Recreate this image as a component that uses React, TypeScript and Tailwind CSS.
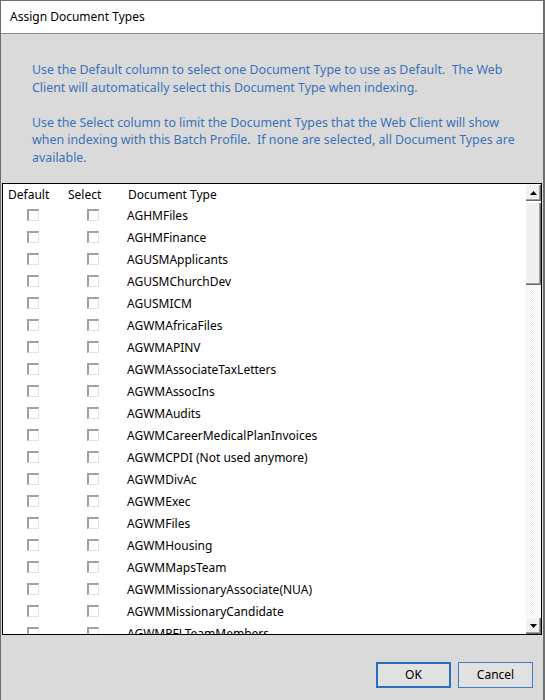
const items = [
  'AGHMFiles',
  'AGHMFinance',
  'AGUSMApplicants',
  'AGUSMChurchDev',
  'AGUSMICM',
  'AGWMAfricaFiles',
  'AGWMAPINV',
  'AGWMAssociateTaxLetters',
  'AGWMAssocIns',
  'AGWMAudits',
  'AGWMCareerMedicalPlanInvoices',
  'AGWMCPDI (Not used anymore)',
  'AGWMDivAc',
  'AGWMExec',
  'AGWMFiles',
  'AGWMHousing',
  'AGWMMapsTeam',
  'AGWMMissionaryAssociate(NUA)',
  'AGWMMissionaryCandidate',
  'AGWMPFLTeamMembers',
];

function Check() {
  return (
    <span className="block w-[12px] h-[12px] -mt-[2px] box-border bg-white border-t-2 border-l-2 border-r border-b border-t-[#a0a0a0] border-l-[#a0a0a0] border-r-[#e3e3e3] border-b-[#e3e3e3]" />
  );
}

function ScrollButton({ down }: { down?: boolean }) {
  return (
    <div className="h-[17px] flex items-center justify-center bg-[#f0f0f0] shadow-[inset_1px_1px_#ffffff,inset_-1px_-1px_#696969,inset_-2px_-2px_#a0a0a0]">
      <svg width="7" height="4" viewBox="0 0 7 4">
        {down ? <path d="M0 0h7L3.5 4z" fill="#000" /> : <path d="M0 4h7L3.5 0z" fill="#000" />}
      </svg>
    </div>
  );
}

export default function App() {
  return (
    <div
      className="w-[545px] h-[700px] flex flex-col bg-[#dadada] border-l border-t border-r-2 border-[#6e6e6e] overflow-hidden text-[12px] text-black"
      style={{ fontFamily: '"Segoe UI", "Noto Sans", sans-serif' }}
    >
      {/* title bar */}
      <div className="h-[33px] shrink-0 bg-white border-b border-[#8a8a8a] flex items-center pl-[9px]">
        Assign Document Types
      </div>

      {/* instructions */}
      <div className="h-[149px] shrink-0 pt-[27px] pl-[31px] text-[#3a72b8] text-[12.4px] leading-[17.5px] whitespace-pre">
        <p>Use the Default column to select one Document Type to use as Default.  The Web</p>
        <p>Client will automatically select this Document Type when indexing.</p>
        <p>&nbsp;</p>
        <p>Use the Select column to limit the Document Types that the Web Client will show</p>
        <p>when indexing with this Batch Profile.  If none are selected, all Document Types are</p>
        <p>available.</p>
      </div>

      {/* list */}
      <div className="h-[452px] shrink-0 mx-px bg-white border border-black flex overflow-hidden">
        <div className="flex-1 overflow-hidden">
          <div className="grid grid-cols-[60px_60px_1fr] h-[21px] items-center">
            <span className="pl-[5px]">Default</span>
            <span className="pl-[5px]">Select</span>
            <span className="pl-[5px]">Document Type</span>
          </div>
          {items.map((name) => (
            <div key={name} className="grid grid-cols-[60px_60px_1fr] h-[22px] items-center">
              <span className="pl-[24px]"><Check /></span>
              <span className="pl-[24px]"><Check /></span>
              <span className="pl-[4px] whitespace-nowrap">{name}</span>
            </div>
          ))}
        </div>
        <div className="w-[16px] shrink-0 flex flex-col">
          <ScrollButton />
          <div className="h-[83px] mt-px bg-[#f0f0f0] shadow-[inset_1px_1px_#ffffff,inset_-1px_-1px_#696969,inset_-2px_-2px_#a0a0a0]" />
          <div className="flex-1 bg-[repeating-conic-gradient(#f0f0f0_0%_25%,#ffffff_0%_50%)] bg-size-[2px_2px]" />
          <ScrollButton down />
        </div>
      </div>

      {/* buttons */}
      <div className="flex justify-end gap-[7px] pt-[27px] pr-[10px]">
        <button className="w-[75px] h-[26px] bg-[#e1e1e1] border-2 border-[#2a6ebd]">OK</button>
        <button className="w-[75px] h-[26px] bg-[#e1e1e1] border border-[#3c7fc0]">Cancel</button>
      </div>
    </div>
  );
}
